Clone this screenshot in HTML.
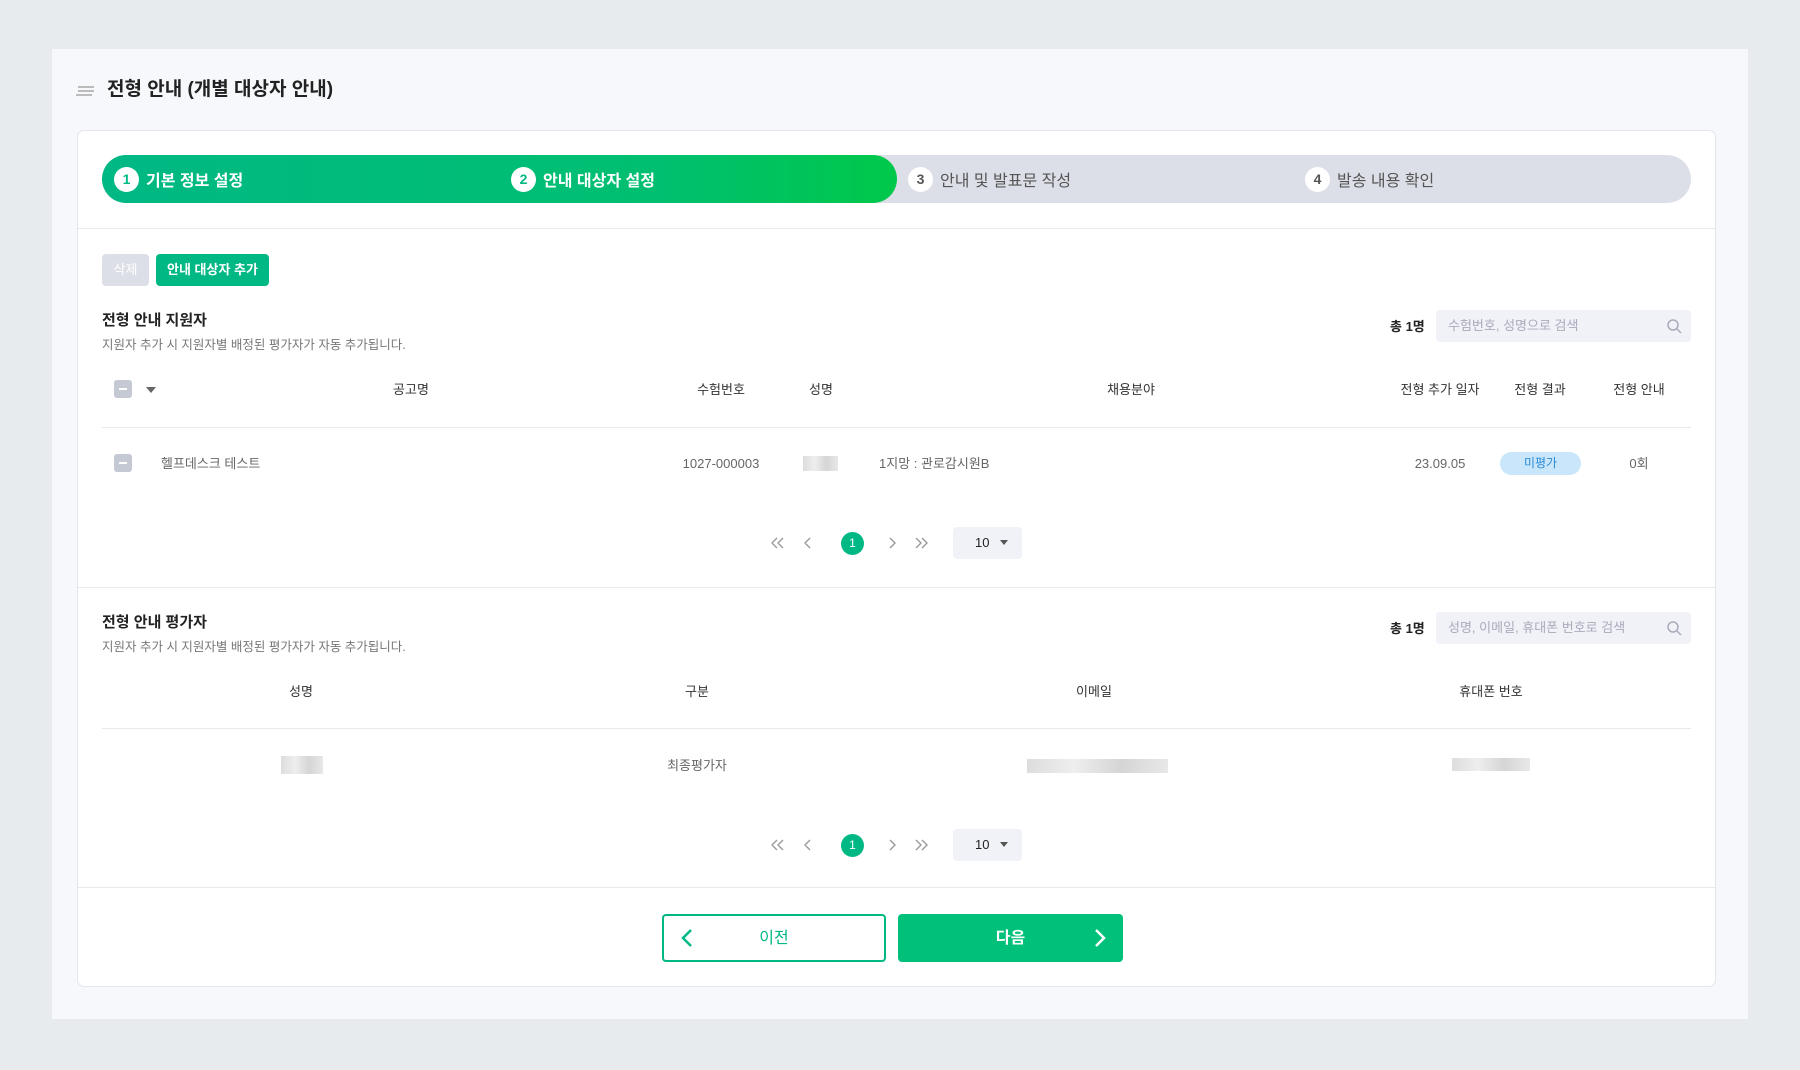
<!DOCTYPE html>
<html><head><meta charset="utf-8"><style>
*{box-sizing:border-box;margin:0;padding:0}
body{width:1800px;height:1070px;background:#e8ebee;font-family:"Liberation Sans","Noto Sans CJK KR",sans-serif;color:#222;position:relative;overflow:hidden}
.a{position:absolute}
.panel{left:52px;top:49px;width:1696px;height:970px;background:#f6f8fb}
.card{left:77px;top:130px;width:1639px;height:857px;background:#fff;border:1px solid #e3e6ec;border-radius:7px}
.t{position:absolute;white-space:nowrap;line-height:20px}
.c{transform:translateX(-50%)}
.hd{font-size:13px;color:#333;top:380px}
.line{position:absolute;height:1px;background:#e7e9ee}
.step{position:absolute;top:155px;height:48px}
.circ{position:absolute;width:25px;height:25px;border-radius:50%;background:#fff;font-size:14px;font-weight:bold;text-align:center;line-height:25px;top:167px}
.sl{position:absolute;top:171px;font-size:16px;font-weight:bold;line-height:22px}
.search{position:absolute;width:255px;height:32px;background:#f0f2f7;border-radius:4px;font-size:13px;color:#aab;padding:0 12px;line-height:32px}
.sel{position:absolute;width:69px;height:32px;background:#f0f2f7;border-radius:4px;font-size:13px;padding-left:22px;line-height:32px}
.blur{position:absolute;background:linear-gradient(90deg,#ddd,#eee,#d5d5d5,#e8e8e8);}
.r{font-size:13px;color:#666;top:454px}
</style></head><body>
<div class="a panel"></div>
<div class="a" style="left:78px;top:86px;width:16px;height:2px;background:#bbb;box-shadow:0 4px 0 #bbb,-2px 8px 0 #bbb"></div>
<div class="t" style="left:107px;top:79px;font-size:19px;font-weight:bold;line-height:22px">전형 안내 (개별 대상자 안내)</div>
<div class="a card"></div>
<div class="step" style="left:102px;width:1589px;background:#dcdfe7;border-radius:24px"></div>
<div class="step" style="left:102px;width:795px;background:linear-gradient(90deg,#00b884,#00bf70 70%,#00c84a);border-radius:24px"></div>
<div class="circ" style="left:114px;color:#00b884">1</div><div class="sl" style="left:146px;color:#fff">기본 정보 설정</div>
<div class="circ" style="left:511px;color:#00b884">2</div><div class="sl" style="left:543px;color:#fff">안내 대상자 설정</div>
<div class="circ" style="left:908px;color:#555">3</div><div class="sl" style="left:940px;color:#555;font-weight:normal">안내 및 발표문 작성</div>
<div class="circ" style="left:1305px;color:#555">4</div><div class="sl" style="left:1337px;color:#555;font-weight:normal">발송 내용 확인</div>
<div class="line" style="left:78px;width:1637px;top:228px"></div>
<div class="a" style="left:102px;top:254px;width:47px;height:32px;background:#dcdfe7;border-radius:4px;color:#fff;font-size:13px;text-align:center;line-height:32px">삭제</div>
<div class="a" style="left:156px;top:254px;width:113px;height:32px;background:#00b884;border-radius:4px;color:#fff;font-size:13px;font-weight:bold;text-align:center;line-height:32px">안내 대상자 추가</div>
<div class="t" style="left:102px;top:311px;font-size:15px;font-weight:bold">전형 안내 지원자</div>
<div class="t" style="left:102px;top:335px;font-size:12.5px;color:#777">지원자 추가 시 지원자별 배정된 평가자가 자동 추가됩니다.</div>
<div class="t" style="left:1390px;top:317px;font-size:13px;font-weight:bold">총 1명</div>
<div class="search" style="left:1436px;top:310px">수험번호, 성명으로 검색</div>
<svg class="a" style="left:1667px;top:319px" width="15" height="15"><circle cx="6" cy="6" r="5" fill="none" stroke="#aab" stroke-width="1.5"/><path d="M10 10l4 4" stroke="#aab" stroke-width="1.5"/></svg>
<div class="a" style="left:114px;top:380px;width:18px;height:18px;background:#c5c9d3;border-radius:3px"><div style="margin:8px 5px;width:8px;height:2px;background:#fff"></div></div>
<div class="a" style="left:146px;top:387px;border:5px solid transparent;border-top:6px solid #666"></div>
<div class="t c hd" style="left:411px">공고명</div><div class="t c hd" style="left:721px">수험번호</div><div class="t c hd" style="left:821px">성명</div><div class="t c hd" style="left:1131px">채용분야</div><div class="t c hd" style="left:1440px">전형 추가 일자</div><div class="t c hd" style="left:1540px">전형 결과</div><div class="t c hd" style="left:1639px">전형 안내</div>
<div class="line" style="left:102px;width:1589px;top:427px"></div>
<div class="a" style="left:114px;top:454px;width:18px;height:18px;background:#c5c9d3;border-radius:3px"><div style="margin:8px 5px;width:8px;height:2px;background:#fff"></div></div>
<div class="t r" style="left:161px">헬프데스크 테스트</div>
<div class="t c r" style="left:721px;top:454px">1027-000003</div>
<div class="blur" style="left:803px;top:456px;width:35px;height:15px"></div>
<div class="t r" style="left:879px">1지망 : 관로감시원B</div>
<div class="t c r" style="left:1440px;top:454px">23.09.05</div>
<div class="a" style="left:1500px;top:452px;width:81px;height:23px;background:#c9e6fb;border-radius:12px;color:#2a8ad4;font-size:12px;text-align:center;line-height:23px">미평가</div>
<div class="t c r" style="left:1639px">0회</div>
<svg class="a" style="left:770px;top:536px" width="160" height="14" fill="none" stroke="#999" stroke-width="1.4"><path d="M7 2L2 7l5 5M13 2L8 7l5 5M40 2L35 7l5 5M120 2l5 5-5 5M146 2l5 5-5 5M152 2l5 5-5 5"/></svg>
<div class="a" style="left:841px;top:532px;width:23px;height:23px;border-radius:50%;background:#00b884;color:#fff;font-size:12px;text-align:center;line-height:23px">1</div>
<div class="sel" style="left:953px;top:527px">10</div><div class="a" style="left:1000px;top:540px;border:4px solid transparent;border-top:5px solid #555"></div>
<div class="line" style="left:78px;width:1637px;top:587px"></div>
<div class="t" style="left:102px;top:613px;font-size:15px;font-weight:bold">전형 안내 평가자</div>
<div class="t" style="left:102px;top:637px;font-size:12.5px;color:#777">지원자 추가 시 지원자별 배정된 평가자가 자동 추가됩니다.</div>
<div class="t" style="left:1390px;top:619px;font-size:13px;font-weight:bold">총 1명</div>
<div class="search" style="left:1436px;top:612px">성명, 이메일, 휴대폰 번호로 검색</div>
<svg class="a" style="left:1667px;top:621px" width="15" height="15"><circle cx="6" cy="6" r="5" fill="none" stroke="#aab" stroke-width="1.5"/><path d="M10 10l4 4" stroke="#aab" stroke-width="1.5"/></svg>
<div class="t c hd" style="left:301px;top:682px">성명</div><div class="t c hd" style="left:697px;top:682px">구분</div><div class="t c hd" style="left:1094px;top:682px">이메일</div><div class="t c hd" style="left:1491px;top:682px">휴대폰 번호</div>
<div class="line" style="left:102px;width:1589px;top:728px"></div>
<div class="blur" style="left:281px;top:756px;width:42px;height:18px"></div>
<div class="t c r" style="left:697px;top:756px">최종평가자</div>
<div class="blur" style="left:1027px;top:759px;width:141px;height:14px"></div>
<div class="blur" style="left:1452px;top:758px;width:78px;height:13px"></div>
<svg class="a" style="left:770px;top:838px" width="160" height="14" fill="none" stroke="#999" stroke-width="1.4"><path d="M7 2L2 7l5 5M13 2L8 7l5 5M40 2L35 7l5 5M120 2l5 5-5 5M146 2l5 5-5 5M152 2l5 5-5 5"/></svg>
<div class="a" style="left:841px;top:834px;width:23px;height:23px;border-radius:50%;background:#00b884;color:#fff;font-size:12px;text-align:center;line-height:23px">1</div>
<div class="sel" style="left:953px;top:829px">10</div><div class="a" style="left:1000px;top:842px;border:4px solid transparent;border-top:5px solid #555"></div>
<div class="line" style="left:78px;width:1637px;top:887px"></div>
<div class="a" style="left:662px;top:914px;width:224px;height:48px;border:2px solid #00b884;border-radius:4px;color:#00b884;font-size:16px;text-align:center;line-height:46px">이전</div>
<svg class="a" style="left:680px;top:928px" width="14" height="20"><path d="M11 2L3 10l8 8" fill="none" stroke="#00b884" stroke-width="2.5"/></svg>
<div class="a" style="left:898px;top:914px;width:225px;height:48px;background:#00c07a;border-radius:4px;color:#fff;font-size:16px;font-weight:bold;text-align:center;line-height:50px">다음</div>
<svg class="a" style="left:1093px;top:928px" width="14" height="20"><path d="M3 2l8 8-8 8" fill="none" stroke="#fff" stroke-width="2.5"/></svg>
</body></html>
